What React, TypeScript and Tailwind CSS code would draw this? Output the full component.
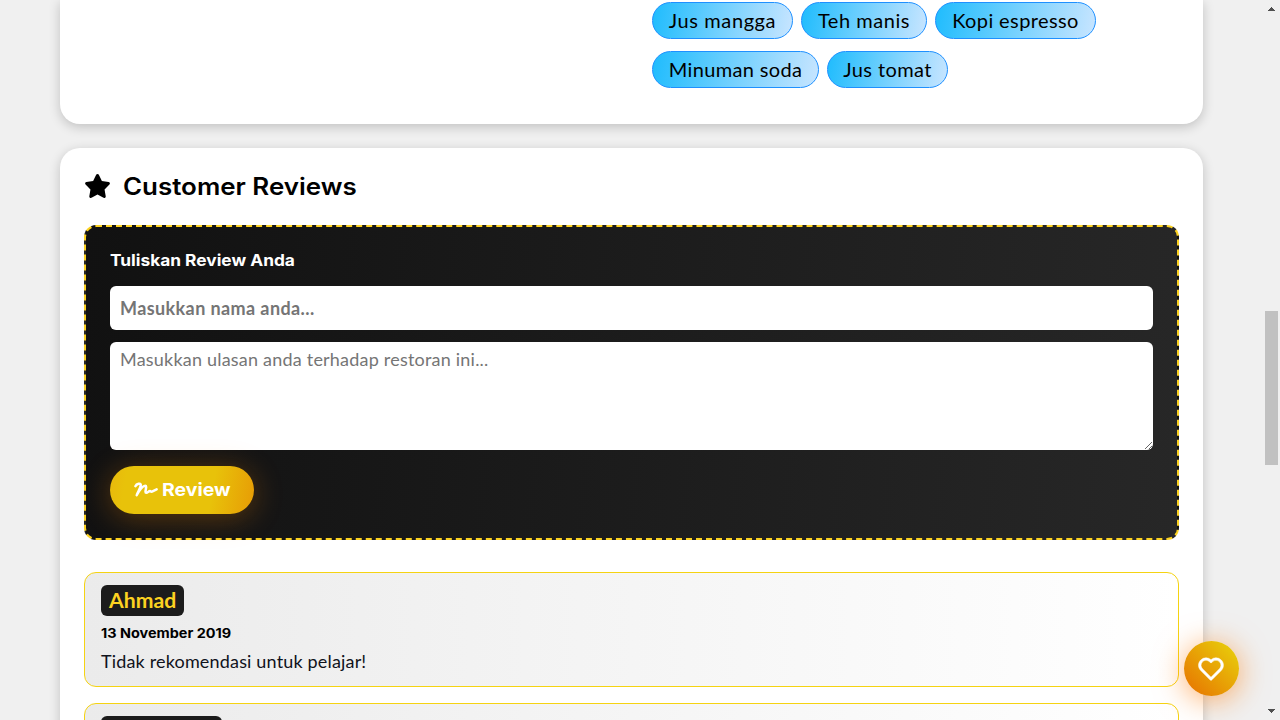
import { FaStar } from "react-icons/fa6";
import { BiHeart } from "react-icons/bi";

const body = "font-['Lato','Noto_Sans',sans-serif]";
const head = "font-['Inter','Noto_Sans',sans-serif]";

function Drink({ children, className }: { children: string; className: string }) {
  return (
    <li className={`flex h-[37px] items-center justify-center rounded-full border border-[#1e90ff] bg-linear-[100deg,#1fbcfd,#c8e5ff] pb-0.5 text-[20px] whitespace-nowrap text-black ${body} ${className}`}>
      <span>{children}</span>
    </li>
  );
}

function Review({ name, nameClass, date, text }: { name?: string; nameClass: string; date?: string; text?: string }) {
  return (
    <article className="h-[115px] shrink-0 rounded-xl border border-[#f5d312] bg-linear-to-r from-[#ebebeb] to-white px-4 pt-3">
      <h3 className={`flex h-[31px] items-center justify-center rounded-md bg-[#1c1c1c] pb-0.5 text-[20px] font-bold text-[#fcd221] ${body} ${nameClass}`}><span className="scale-x-[1.06]">{name}</span></h3>
      <p className={`mt-2 h-[18px] text-[13px] leading-[18px] font-bold text-black ${head}`}><span className="inline-block origin-left scale-x-[1.11]">{date}</span></p>
      <p className={`mt-[7px] text-[18px] leading-6 text-[#10131c] ${body}`}><span className="tracking-[0.17px]">{text}</span></p>
    </article>
  );
}

export default function App() {
  return (
    <div className="flex h-[720px] w-[1280px] overflow-hidden bg-[#f0f0f0]">
      <main className="flex w-[1263px] flex-col gap-6 pr-[60px] pl-[60px]">
        <section className="flex h-[124px] shrink-0 justify-end rounded-b-[20px] bg-white shadow-[0_3px_12px_rgba(0,0,0,0.2)]">
          <ul className="flex w-[551px] flex-wrap content-start gap-x-2 gap-y-3 pt-0.5">
            <Drink className="w-[141px] tracking-[0.6px]">Jus mangga</Drink>
            <Drink className="w-[126px] tracking-[0.55px]">Teh manis</Drink>
            <Drink className="w-[161px] tracking-[0.4px]">Kopi espresso</Drink>
            <Drink className="w-[167px] tracking-[0.35px]">Minuman soda</Drink>
            <Drink className="w-[121px] tracking-[0.4px]">Jus tomat</Drink>
          </ul>
        </section>
        <section className="flex h-[700px] shrink-0 flex-col rounded-[20px] bg-white px-6 pt-6 shadow-[0_3px_12px_rgba(0,0,0,0.2)]">
          <h2 className={`flex h-[29px] items-center text-[24px] font-semibold text-black ${head}`}>
            <FaStar className="mr-3 mb-0.5 h-6 w-[27px]" />
            <span className="origin-left scale-x-[1.08]">Customer Reviews</span>
          </h2>
          <form className="mt-6 h-[315px] shrink-0 rounded-xl border-2 border-dashed border-[#fcd221] bg-linear-[95deg,#111111,#272727] p-6">
            <label className={`block h-5 text-[16px] leading-[18px] font-bold text-white ${head}`}><span className="inline-block origin-left scale-x-[1.082]">Tuliskan Review Anda</span></label>
            <input className={`mt-[15px] block h-11 w-full rounded-md bg-white px-[10px] text-[18px] font-bold tracking-[0.4px] placeholder:text-[#757575] ${body}`} placeholder="Masukkan nama anda..." />
            <textarea className={`mt-3 block h-[108px] w-full resize rounded-md bg-white px-[10px] py-[5px] text-[18px] leading-6 tracking-[0.21px] placeholder:text-[#757575] ${body}`} placeholder="Masukkan ulasan anda terhadap restoran ini..." />
            <button type="button" className={`mt-4 flex h-12 w-36 items-center rounded-full bg-[linear-gradient(100deg,#e8b80c_0%,#e8c20a_12%,#e8c20a_70%,#e79b05_100%)] pl-6 text-[18px] font-bold text-white shadow-[0_4px_30px_rgba(255,140,0,0.3)] ${head}`}>
              <svg viewBox="0 0 24 16" className="mr-1 h-4 w-6" fill="none" stroke="currentColor" strokeWidth="2.5" strokeLinecap="round" strokeLinejoin="round">
                <path d="M1.4 4.2C2.5 1.8 7 .5 6.8 3.2C6.6 6 4 9.5 2.7 13.2C5 9 8.5 3.8 11.2 3.8C13.8 3.8 10 10.8 12.2 10.8C14 10.8 14.4 9 16 9C17 9 16.5 10 18 9.6L22.6 7.4" />
              </svg>
              <span className="mb-0.5 origin-left scale-x-[1.08]">Review</span>
            </button>
          </form>
          <div className="mt-8 flex flex-col gap-4">
            <Review name="Ahmad" nameClass="w-[83px]" date="13 November 2019" text="Tidak rekomendasi untuk pelajar!" />
            <Review nameClass="w-[121px]" />
          </div>
        </section>
      </main>
      <aside className="flex w-[17px] flex-col items-center">
        <svg viewBox="0 0 17 720" className="h-[720px] w-[17px]">
          <path d="M5 11h7v-1h-1v-1h-1v-1h-1v-1h-1v1h-1v1h-1v1h-1z" fill="#505050" />
          <path d="M2 311h13v154h-13z" fill="#c1c1c1" />
          <path d="M5 709h7v1h-1v1h-1v1h-1v1h-1v-1h-1v-1h-1v-1h-1z" fill="#505050" />
        </svg>
      </aside>
      <button aria-label="Favorite" className="fixed top-[641px] left-[1184px] flex h-[55px] w-[55px] items-center justify-center rounded-full bg-linear-[45deg,#e76f00,#e8c60a_85%] text-white shadow-[0_4px_30px_rgba(255,120,0,0.6)]">
        <BiHeart className="mr-px h-[30px] w-[30px]" stroke="currentColor" strokeWidth={0.4} />
      </button>
    </div>
  );
}
